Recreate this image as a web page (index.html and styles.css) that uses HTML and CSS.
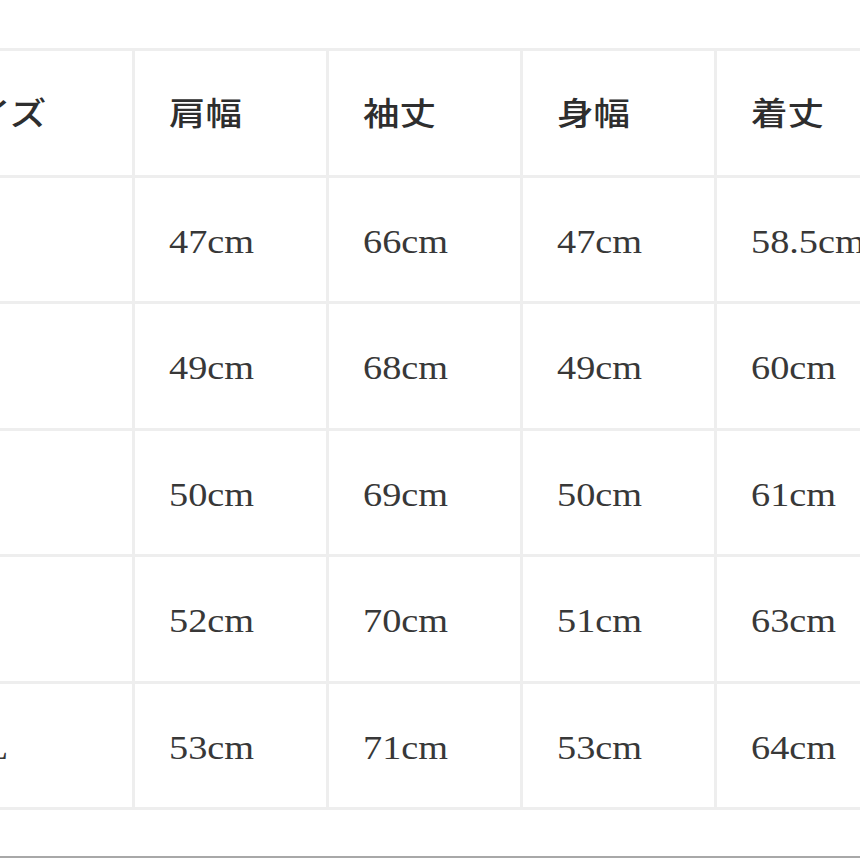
FILE: index.html
```html
<!DOCTYPE html>
<html lang="ja">
<head>
<meta charset="utf-8">
<link rel="stylesheet" href="styles.css">
</head>
<body>
<div class="page">
  <div class="table">
    <div class="cell head"><span class="t">サイズ</span></div>
    <div class="cell head"><span class="t">肩幅</span></div>
    <div class="cell head"><span class="t">袖丈</span></div>
    <div class="cell head"><span class="t">身幅</span></div>
    <div class="cell head"><span class="t">着丈</span></div>

    <div class="cell"><span class="t">S</span></div>
    <div class="cell"><span class="t">47cm</span></div>
    <div class="cell"><span class="t">66cm</span></div>
    <div class="cell"><span class="t">47cm</span></div>
    <div class="cell"><span class="t">58.5cm</span></div>

    <div class="cell"><span class="t">M</span></div>
    <div class="cell"><span class="t">49cm</span></div>
    <div class="cell"><span class="t">68cm</span></div>
    <div class="cell"><span class="t">49cm</span></div>
    <div class="cell"><span class="t">60cm</span></div>

    <div class="cell"><span class="t">L</span></div>
    <div class="cell"><span class="t">50cm</span></div>
    <div class="cell"><span class="t">69cm</span></div>
    <div class="cell"><span class="t">50cm</span></div>
    <div class="cell"><span class="t">61cm</span></div>

    <div class="cell"><span class="t">XL</span></div>
    <div class="cell"><span class="t">52cm</span></div>
    <div class="cell"><span class="t">70cm</span></div>
    <div class="cell"><span class="t">51cm</span></div>
    <div class="cell"><span class="t">63cm</span></div>

    <div class="cell"><span class="t">2XL</span></div>
    <div class="cell"><span class="t">53cm</span></div>
    <div class="cell"><span class="t">71cm</span></div>
    <div class="cell"><span class="t">53cm</span></div>
    <div class="cell"><span class="t">64cm</span></div>
  </div>
  <div class="rule"></div>
</div>
</body>
</html>
```

FILE: styles.css
```css
html, body {
  margin: 0;
  padding: 0;
  background: #ffffff;
}
body {
  width: 860px;
  height: 860px;
  overflow: hidden;
}
.page {
  padding-top: 50px;
}
.table {
  display: grid;
  grid-template-columns: 228px repeat(4, 191px);
  grid-auto-rows: 123.5px;
  gap: 3px;
  background: #eeeeee;
  border-top: 3px solid #eeeeee;
  border-bottom: 3px solid #eeeeee;
  margin-left: -96px;
  width: max-content;
  margin-top: -2px;
}
.cell {
  background: #ffffff;
  display: flex;
  align-items: center;
  padding-left: 34px;
  overflow: hidden;
  white-space: nowrap;
  font-family: "Liberation Serif", "Times New Roman", serif;
  font-size: 33px;
  color: #383838;
}
.cell .t {
  display: inline-block;
  transform: scaleX(1.16);
  transform-origin: left center;
  position: relative;
  top: 3px;
}
.cell.head {
  font-family: "Noto Sans CJK JP", "Noto Sans", sans-serif;
  font-weight: 500;
  font-size: 32px;
  color: #2e2e2e;
}
.cell.head .t {
  transform: scaleX(1.14);
  top: -2px;
}
.rule {
  margin-top: 46px;
  height: 2px;
  background: #a8a8a8;
}
```
